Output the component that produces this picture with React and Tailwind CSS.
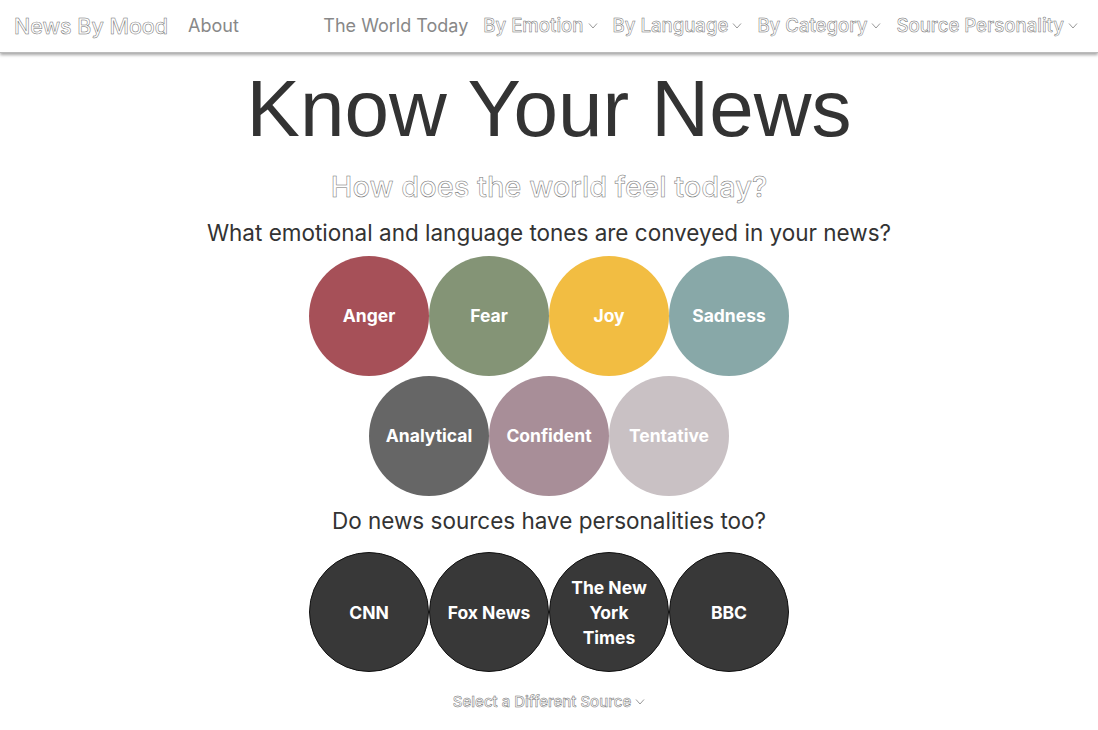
import React from "react";

const outline = "text-white font-medium [-webkit-text-stroke:0.5px_#707070]";

const Chevron = ({ className = "" }) => (
  <svg viewBox="0 0 10 6" className={"w-[10px] h-[6px] " + className} fill="none" stroke="#999" strokeWidth="1">
    <path d="M1 0.5 L5 5 L9 0.5" />
  </svg>
);

const tones = [
  [
    { name: "Anger", bg: "bg-[#a65058]" },
    { name: "Fear", bg: "bg-[#849476]" },
    { name: "Joy", bg: "bg-[#f2bd42]" },
    { name: "Sadness", bg: "bg-[#88a8a8]" },
  ],
  [
    { name: "Analytical", bg: "bg-[#666666]" },
    { name: "Confident", bg: "bg-[#a88e98]" },
    { name: "Tentative", bg: "bg-[#c9c1c4]" },
  ],
];

const sources = ["CNN", "Fox News", "The New York Times", "BBC"];

const Circle = ({ label, className }) => (
  <div
    className={
      "w-[120px] h-[120px] rounded-full flex items-center justify-center text-center text-white font-bold text-[17.5px] leading-[25px] px-[14px] " +
      className
    }
  >
    {label}
  </div>
);

const NavDrop = ({ label }) => (
  <span className={"flex items-center gap-[4px] text-[18.6px] " + outline}>
    {label}
    <Chevron />
  </span>
);

export default function App() {
  return (
    <div className="min-h-screen bg-white text-[#333] font-['Inter','Liberation_Sans',sans-serif]">
      <nav className="h-[53px] flex items-center justify-between px-[14px] border-b border-[#bbb] shadow-[0_2px_3px_rgba(0,0,0,0.35)] text-[18px]">
        <div className="flex items-center gap-[20px]">
          <span className={"text-[21.4px] " + outline}>News By Mood</span>
          <span className="text-[#888]">About</span>
        </div>
        <div className="flex items-center gap-[15px] pr-[6px]">
          <span className="text-[#888]">The World Today</span>
          <NavDrop label="By Emotion" />
          <NavDrop label="By Language" />
          <NavDrop label="By Category" />
          <NavDrop label="Source Personality" />
        </div>
      </nav>

      <main className="flex flex-col items-center">
        <h1 className="text-[80px] leading-none mt-[16px] text-[#333] font-['Liberation_Sans',Arial,sans-serif]">
          Know Your News
        </h1>
        <h2 className={"text-[29px] leading-none mt-[23px] " + outline}>How does the world feel today?</h2>
        <h3 className="text-[22.5px] leading-none mt-[21px] text-[#333]">
          What emotional and language tones are conveyed in your news?
        </h3>

        <div className="flex flex-col items-center mt-[11px]">
          {tones.map((row, i) => (
            <div key={i} className="flex">
              {row.map((t) => (
                <Circle key={t.name} label={t.name} className={t.bg} />
              ))}
            </div>
          ))}
        </div>

        <h3 className="text-[22.5px] leading-none mt-[14px] text-[#333]">Do news sources have personalities too?</h3>

        <div className="flex mt-[20px]">
          {sources.map((s) => (
            <Circle key={s} label={s} className="bg-[#383838] border border-[#111]" />
          ))}
        </div>

        <div className={"flex items-center gap-[4px] mt-[19px] text-[15px] " + outline}>
          Select a Different Source
          <Chevron className="w-[8px] h-[5px]" />
        </div>
      </main>
    </div>
  );
}
